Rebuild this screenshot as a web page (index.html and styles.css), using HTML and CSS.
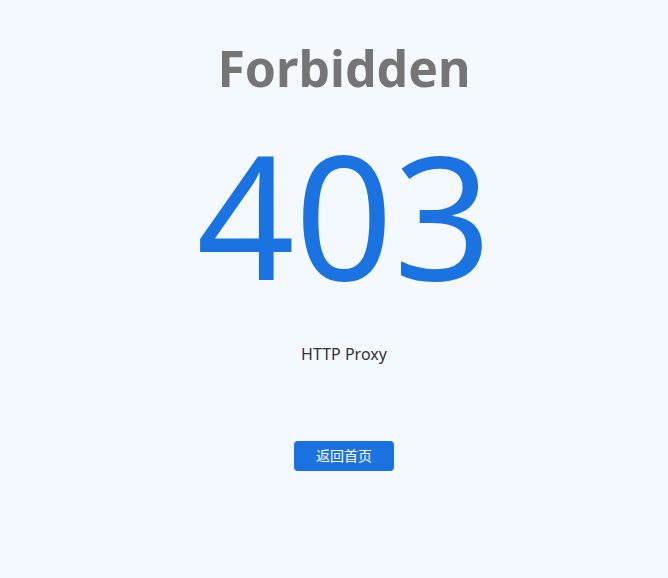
FILE: index.html
```html
<!DOCTYPE html>
<html lang="zh-CN">
<head>
    <meta charset="UTF-8">
    <meta name="viewport" content="width=device-width, initial-scale=1.0">
    <title>403 Forbidden</title>
    <link rel="stylesheet" href="styles.css">
</head>
<body>
    <div class="error-page">
        <h1 class="title">Forbidden</h1>
        <div class="code">403</div>
        <p class="server">HTTP Proxy</p>
        <a class="home-btn" href="/">返回首页</a>
    </div>
</body>
</html>
```

FILE: styles.css
```css
body {
    margin: 0;
    background-color: #f4f8ff;
    font-family: "Noto Sans", "Noto Sans CJK SC", sans-serif;
    height: 100vh;
}

.error-page {
    display: flex;
    flex-direction: column;
    align-items: center;
    padding: 30px 0 0 20px;
}

.title {
    margin: 0;
    font-size: 50px;
    font-weight: 700;
    color: #757575;
    line-height: 76px;
}

.code {
    margin-top: 7px;
    font-size: 172px;
    line-height: 200px;
    color: #1a73e0;
}

.server {
    margin: 30px 0 0;
    font-size: 16px;
    color: #333;
}

.home-btn {
    margin-top: 76px;
    display: block;
    width: 100px;
    height: 30px;
    line-height: 30px;
    text-align: center;
    background-color: #1a73e0;
    color: #fff;
    font-size: 14px;
    border-radius: 4px;
    text-decoration: none;
}
```
